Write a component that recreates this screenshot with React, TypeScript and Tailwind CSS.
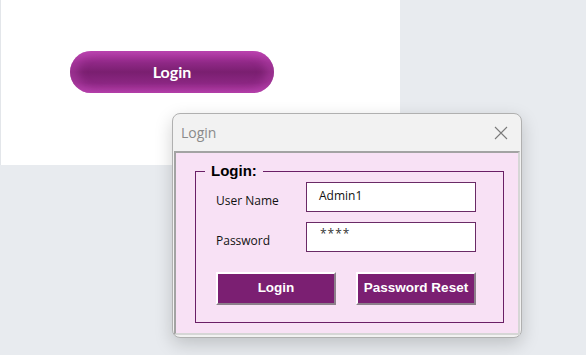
export default function App() {
  return (
    <div className="relative h-[355px] w-[586px] overflow-hidden bg-[#e8ebef] font-['Liberation_Sans',sans-serif]">
      {/* sheet area */}
      <div className="h-[165px] w-[400px] border-l border-[#e3e6ea] bg-white pl-[69px] pt-[51px]">
        <button className="flex h-[42px] w-[204px] items-center justify-center rounded-full bg-[linear-gradient(to_bottom,#b941ad_0%,#8f2886_28%,#7a1f70_50%,#8a2681_75%,#ad3aa3_100%)] pb-[1px] font-['Lato',sans-serif] text-[16px] font-bold text-white shadow-[inset_8px_0_10px_rgba(190,70,180,0.45),inset_-8px_0_10px_rgba(190,70,180,0.45)]">
          Login
        </button>
      </div>

      {/* userform window */}
      <div className="absolute left-[172px] top-[113px] flex h-[225px] w-[350px] flex-col rounded-[8px] border border-[#b0b0b0] bg-[#f2f2f2] shadow-[0_6px_18px_rgba(0,0,0,0.18)]">
        <div className="flex h-[37px] items-center justify-between pl-[8px] pr-[13px]">
          <span className="font-['Open_Sans',sans-serif] text-[14px] text-[#8a8a8a]">Login</span>
          <svg width="14" height="14" viewBox="0 0 14 14" className="mt-[1px]">
            <path d="M1 1 L13 13 M13 1 L1 13" stroke="#7a7a7a" strokeWidth="1.1" fill="none" />
          </svg>
        </div>
        <div className="mx-[1px] mb-[2px] flex-1 border-2 border-[#a3a3a3] border-r-[#d6d6d6] border-b-[#d6d6d6] bg-[#f8e1f5] pl-[19px] pr-[15px] pt-[18px]">
          <div className="relative h-[152px] w-[309px] border border-[#6a1f66] pl-[20px] pt-[10px]">
            <span className="absolute left-[9px] top-[-10px] bg-[#f8e1f5] px-[6px] text-[15px] font-bold leading-[18px] text-black">
              Login:
            </span>
            <div className="flex h-[30px] items-center">
              <span className="w-[90px] pt-[8px] font-['Open_Sans',sans-serif] text-[12px] text-[#111]">User Name</span>
              <div className="h-[30px] w-[170px] border border-[#6a2a66] bg-white pl-[12px] pt-[4px] font-['Open_Sans',sans-serif] text-[12px] text-[#111]">
                Admin1
              </div>
            </div>
            <div className="mt-[10px] flex h-[30px] items-center">
              <span className="w-[90px] pt-[8px] font-['Open_Sans',sans-serif] text-[12px] text-[#111]">Password</span>
              <div className="h-[30px] w-[170px] border border-[#6a2a66] bg-white pl-[13px] pt-[2px] font-['Open_Sans',sans-serif] text-[12px] tracking-[1px] text-[#333]">
                ****
              </div>
            </div>
            <div className="mt-[20px] flex gap-[20px]">
              <button className="h-[33px] w-[120px] border-2 border-white border-b-[#8c7f8a] border-r-[#8c7f8a] bg-[#7b1f72] text-[13.5px] font-bold text-white">
                Login
              </button>
              <button className="h-[33px] w-[120px] border-2 border-white border-b-[#8c7f8a] border-r-[#8c7f8a] bg-[#7b1f72] text-[13.5px] font-bold text-white">
                Password Reset
              </button>
            </div>
          </div>
        </div>
      </div>
    </div>
  );
}
